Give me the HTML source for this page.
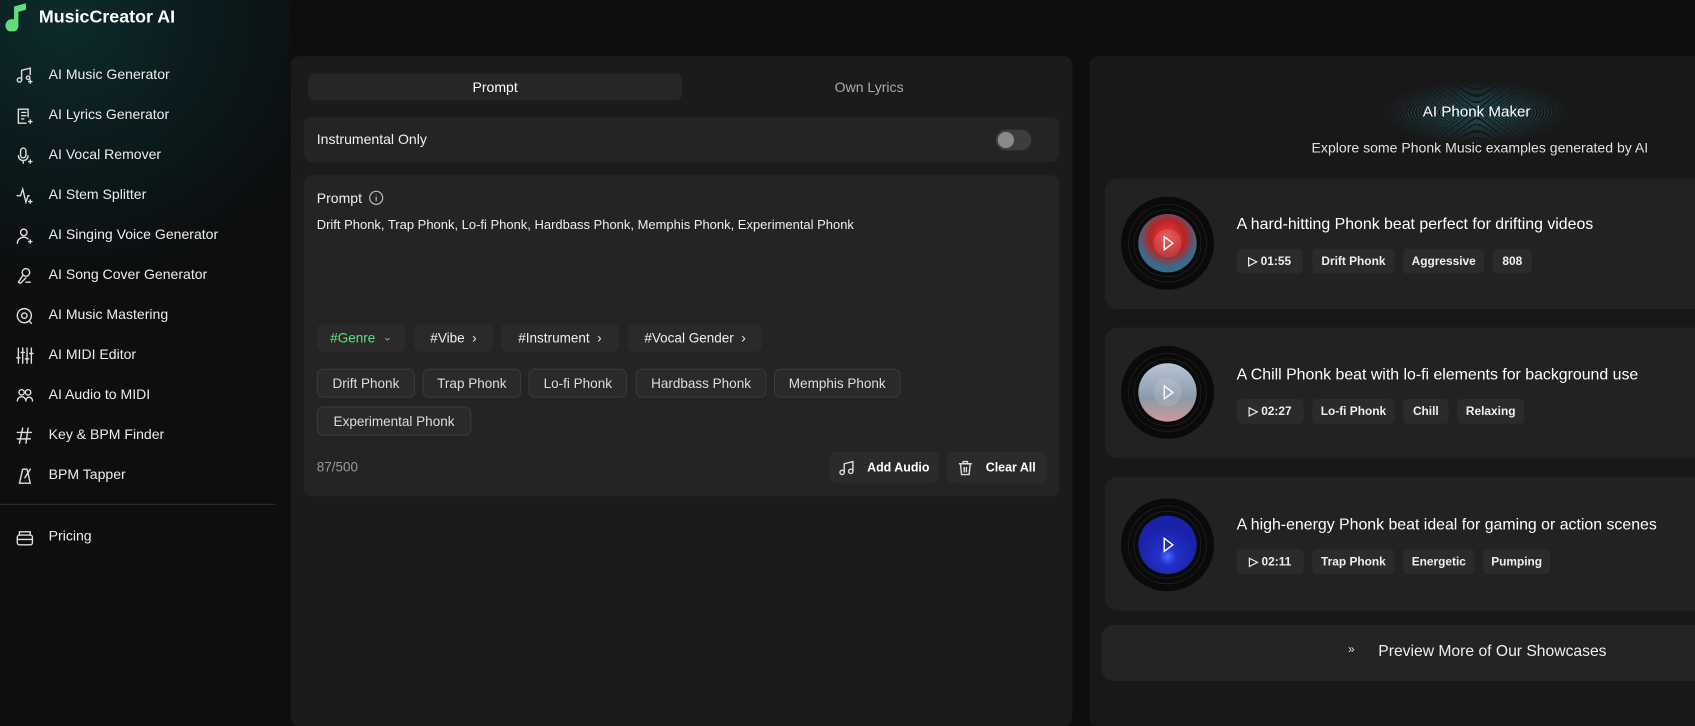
<!DOCTYPE html>
<html><head><meta charset="utf-8"><style>
*{box-sizing:border-box;margin:0;padding:0}
html,body{width:1695px;height:710px;overflow:hidden;background:#0e0e0e;font-family:"Liberation Sans",sans-serif;color:#eee}
#s{position:absolute;left:0;top:0;width:1568px;height:657px;transform:scale(1.081);transform-origin:0 0}
.a{position:absolute}
.side{left:0;top:0;width:268px;height:657px;background:radial-gradient(ellipse 300px 280px at 60px 20px,#0d2b2c 0%,#0b1a1c 45%,#0c0e0f 85%,#0e0e0e 100%)}
.logo{left:36px;top:7px;font-size:16.5px;font-weight:bold;color:#fff}
.nav{left:45px;font-size:13px;color:#ececec}
.lp{left:269px;top:52px;width:723px;height:620px;background:#1b1b1b;border-radius:8px}
.rp{left:1008px;top:52px;width:600px;height:620px;background:#181818;border-radius:8px}
.box{background:#242424;border-radius:8px}
.tb{display:flex;align-items:center;justify-content:center;font-size:13px}
.tag{height:25px;background:#2a2a2a;border-radius:5px;font-size:12.5px;display:flex;align-items:center;justify-content:center;color:#eee}
.chip{height:27px;background:#2a2a2a;border:1px solid #3a3a3a;border-radius:6px;font-size:12.5px;display:flex;align-items:center;justify-content:center;color:#ddd}
.card{left:1022px;width:560px;background:#222;border-radius:12px}
.ct{left:1144px;font-size:14.7px;color:#fff}
.pt{height:23px;background:#2b2b2b;border-radius:4px;font-size:11px;font-weight:bold;display:flex;align-items:center;justify-content:center;color:#eee}
.btn{height:29px;background:#2b2b2b;border-radius:6px;font-size:11.5px;font-weight:bold;display:flex;align-items:center;justify-content:center;gap:12px;color:#fff}
</style></head><body><div id="s">
<div class="a side"></div>
<svg class="a" style="left:3px;top:3px" width="22" height="26" viewBox="0 0 22 26"><path d="M10 3 L21 0 L21 6 L14 8 L14 20 A6 6 0 1 1 10 15 Z" fill="#5fe07a"/></svg>
<div class="a logo">MusicCreator AI</div>

<svg class="a" style="left:0;top:0" width="40" height="520" fill="none" stroke="#ddd" stroke-width="1.3" stroke-linecap="round">
<g transform="translate(15,62)"><circle cx="3" cy="12" r="2"/><path d="M5 12V3l8-2v6"/><circle cx="11" cy="10" r="1.6"/><path d="M13 12v3M11.5 13.5h3"/></g>
<g transform="translate(15,99)"><path d="M11 9V2H2v13h7"/><path d="M5 5h4M5 8h4M5 11h2"/><path d="M13 12v3M11.5 13.5h3"/></g>
<g transform="translate(15,136)"><rect x="4" y="1" width="5" height="9" rx="2.5"/><path d="M2 8a4.5 4.5 0 0 0 9 0M6.5 13v2"/><path d="M13 12v3M11.5 13.5h3"/></g>
<g transform="translate(15,173)"><path d="M1 8h3l2-6 3 12 2-6h1"/><path d="M13 12v3M11.5 13.5h3"/></g>
<g transform="translate(15,210)"><circle cx="7" cy="5" r="3"/><path d="M1 15a6 6 0 0 1 10-4"/><path d="M13 12v3M11.5 13.5h3"/></g>
<g transform="translate(15,247)"><circle cx="9" cy="5" r="3.5"/><path d="M6 8l-4 6 2 1 5-5"/><path d="M9 14h4"/></g>
<g transform="translate(15,284)"><circle cx="7.5" cy="8" r="6.5"/><circle cx="7.5" cy="8" r="2.5"/><path d="M12 13l2 2"/></g>
<g transform="translate(15,321)"><path d="M2 1v14M6 1v14M10 1v14M14 1v14"/><path d="M0.5 10h3M4.5 5h3M8.5 11h3M12.5 6h3"/></g>
<g transform="translate(15,358)"><circle cx="5" cy="5" r="2.5"/><circle cx="11" cy="5" r="2.5"/><path d="M1 13a4 4 0 0 1 8 0M9 12a3 3 0 0 1 6 1"/></g>
<g transform="translate(15,395)"><path d="M6 1L3 15M11 1l-2 14M1 5h13M1 11h12"/></g>
<g transform="translate(15,432)"><path d="M3 15l3-13h4l3 13zM8 10l5-8"/></g>
<g transform="translate(15,489)"><rect x="1" y="6" width="14" height="9" rx="2"/><path d="M3 6V3h10v3M1 10h14"/></g>
</svg>
<div class="a nav" style="top:61px">AI Music Generator</div>
<div class="a nav" style="top:98px">AI Lyrics Generator</div>
<div class="a nav" style="top:135px">AI Vocal Remover</div>
<div class="a nav" style="top:172px">AI Stem Splitter</div>
<div class="a nav" style="top:209px">AI Singing Voice Generator</div>
<div class="a nav" style="top:246px">AI Song Cover Generator</div>
<div class="a nav" style="top:283px">AI Music Mastering</div>
<div class="a nav" style="top:320px">AI MIDI Editor</div>
<div class="a nav" style="top:357px">AI Audio to MIDI</div>
<div class="a nav" style="top:394px">Key &amp; BPM Finder</div>
<div class="a nav" style="top:431px">BPM Tapper</div>
<div class="a" style="left:0;top:466px;width:255px;height:1px;background:#2e3233"></div>
<div class="a nav" style="top:488px">Pricing</div>

<div class="a lp"></div>
<div class="a tb" style="left:285px;top:68px;width:346px;height:25px;background:#262626;border-radius:6px;color:#fff">Prompt</div>
<div class="a tb" style="left:631px;top:68px;width:346px;height:25px;color:#aaa">Own Lyrics</div>
<div class="a box" style="left:281px;top:108px;width:699px;height:42px"></div>
<div class="a" style="left:293px;top:121px;font-size:13px;color:#f0f0f0">Instrumental Only</div>
<div class="a" style="left:921px;top:120px;width:33px;height:19px;border-radius:10px;background:#3d3d3d"></div>
<div class="a" style="left:923px;top:122px;width:15px;height:15px;border-radius:8px;background:#8a8a8a"></div>
<div class="a box" style="left:281px;top:162px;width:699px;height:297px"></div>
<div class="a" style="left:293px;top:176px;font-size:13px;color:#f0f0f0">Prompt</div>
<svg class="a" style="left:341px;top:176px" width="14" height="14" fill="none" stroke="#bbb" stroke-width="1.1"><circle cx="7" cy="7" r="6"/><path d="M7 6v4M7 4v.5"/></svg>
<div class="a" style="left:293px;top:201px;font-size:12px;color:#eee">Drift Phonk, Trap Phonk, Lo-fi Phonk, Hardbass Phonk, Memphis Phonk, Experimental Phonk</div>
<div class="a tag" style="left:293px;top:300px;width:82px;color:#5fe07a">#Genre&nbsp;&nbsp;<span style="font-size:10px">⌄</span></div>
<div class="a tag" style="left:383px;top:300px;width:73px">#Vibe&nbsp;&nbsp;›</div>
<div class="a tag" style="left:463px;top:300px;width:110px">#Instrument&nbsp;&nbsp;›</div>
<div class="a tag" style="left:581px;top:300px;width:124px">#Vocal Gender&nbsp;&nbsp;›</div>
<div class="a chip" style="left:293px;top:341px;width:91px">Drift Phonk</div>
<div class="a chip" style="left:391px;top:341px;width:91px">Trap Phonk</div>
<div class="a chip" style="left:489px;top:341px;width:91px">Lo-fi Phonk</div>
<div class="a chip" style="left:588px;top:341px;width:121px">Hardbass Phonk</div>
<div class="a chip" style="left:716px;top:341px;width:117px">Memphis Phonk</div>
<div class="a chip" style="left:293px;top:376px;width:143px">Experimental Phonk</div>
<div class="a" style="left:293px;top:425px;font-size:12.5px;color:#999">87/500</div>
<div class="a btn" style="left:767px;top:418px;width:102px"><svg width="14" height="14" fill="none" stroke="#ddd" stroke-width="1.3"><circle cx="3" cy="11" r="2"/><circle cx="11" cy="10" r="2"/><path d="M5 11V3l8-2v9"/></svg>Add Audio</div>
<div class="a btn" style="left:876px;top:418px;width:92px"><svg width="14" height="14" fill="none" stroke="#ddd" stroke-width="1.3"><path d="M1 3h12M5 3V1h4v2M2.5 3l1 10h7l1-10M6 6v5M8 6v5"/></svg>Clear All</div>

<div class="a rp"></div>
<div class="a" style="left:1276px;top:74px;width:180px;height:60px;border-radius:50%;background:repeating-radial-gradient(ellipse at center,rgba(40,170,200,.55) 0 1px,transparent 1px 3px);-webkit-mask:radial-gradient(ellipse at center,#000 20%,transparent 70%);mask:radial-gradient(ellipse at center,#000 20%,transparent 70%)"></div>
<div class="a" style="left:1266px;top:95px;width:200px;text-align:center;font-size:14px;color:#fff">AI Phonk Maker</div>
<div class="a" style="left:1169px;top:129px;width:400px;text-align:center;font-size:13px;color:#e0e0e0">Explore some Phonk Music examples generated by AI</div>

<div class="a card" style="top:165px;height:121px"></div>
<div class="a card" style="top:303px;height:121px"></div>
<div class="a card" style="top:441px;height:124px"></div>
<svg class="a" style="left:1030px;top:170px" width="100" height="430">
<defs>
<radialGradient id="g1" cx=".5" cy=".4"><stop offset="0" stop-color="#e44"/><stop offset=".6" stop-color="#b22"/><stop offset="1" stop-color="#3a6a8a"/></radialGradient>
<linearGradient id="g2" x1="0" y1="0" x2="0" y2="1"><stop offset="0" stop-color="#b8c6d6"/><stop offset=".6" stop-color="#8b9aa8"/><stop offset="1" stop-color="#c99"/></linearGradient>
<radialGradient id="g3" cx=".5" cy=".7"><stop offset="0" stop-color="#4a6aff"/><stop offset=".3" stop-color="#2230c8"/><stop offset="1" stop-color="#1a22a8"/></radialGradient>
</defs>
<g transform="translate(50,55)"><circle r="43" fill="#0a0a0a"/><circle r="36" fill="none" stroke="#222" stroke-width=".7"/><circle r="31" fill="none" stroke="#222" stroke-width=".7"/><circle r="27" fill="url(#g1)"/><circle r="13" fill="rgba(255,255,255,.12)"/><path d="M-3-6L5 0L-3 6Z" fill="none" stroke="#fff" stroke-width="1.3"/></g>
<g transform="translate(50,193)"><circle r="43" fill="#0a0a0a"/><circle r="36" fill="none" stroke="#222" stroke-width=".7"/><circle r="31" fill="none" stroke="#222" stroke-width=".7"/><circle r="27" fill="url(#g2)"/><circle r="13" fill="rgba(255,255,255,.12)"/><path d="M-3-6L5 0L-3 6Z" fill="none" stroke="#fff" stroke-width="1.3"/></g>
<g transform="translate(50,334)"><circle r="43" fill="#0a0a0a"/><circle r="36" fill="none" stroke="#222" stroke-width=".7"/><circle r="31" fill="none" stroke="#222" stroke-width=".7"/><circle r="27" fill="url(#g3)"/><path d="M-3-6L5 0L-3 6Z" fill="none" stroke="#fff" stroke-width="1.3"/></g>
</svg>
<div class="a ct" style="top:200px">A hard-hitting Phonk beat perfect for drifting videos</div>
<div class="a ct" style="top:339px">A Chill Phonk beat with lo-fi elements for background use</div>
<div class="a ct" style="top:478px">A high-energy Phonk beat ideal for gaming or action scenes</div>
<div class="a pt" style="left:1144px;top:230px;width:61px">▷ 01:55</div>
<div class="a pt" style="left:1214px;top:230px;width:76px">Drift Phonk</div>
<div class="a pt" style="left:1298px;top:230px;width:75px">Aggressive</div>
<div class="a pt" style="left:1381px;top:230px;width:36px">808</div>
<div class="a pt" style="left:1144px;top:369px;width:62px">▷ 02:27</div>
<div class="a pt" style="left:1214px;top:369px;width:76px">Lo-fi Phonk</div>
<div class="a pt" style="left:1298px;top:369px;width:42px">Chill</div>
<div class="a pt" style="left:1348px;top:369px;width:62px">Relaxing</div>
<div class="a pt" style="left:1144px;top:508px;width:62px">▷ 02:11</div>
<div class="a pt" style="left:1214px;top:508px;width:76px">Trap Phonk</div>
<div class="a pt" style="left:1298px;top:508px;width:66px">Energetic</div>
<div class="a pt" style="left:1372px;top:508px;width:62px">Pumping</div>
<div class="a" style="left:1019px;top:578px;width:560px;height:52px;background:#242424;border-radius:12px"></div>
<div class="a" style="left:1247px;top:595px;font-size:11px;color:#ddd">»</div>
<div class="a" style="left:1275px;top:595px;font-size:14.5px;color:#eee">Preview More of Our Showcases</div>
</div></body></html>
